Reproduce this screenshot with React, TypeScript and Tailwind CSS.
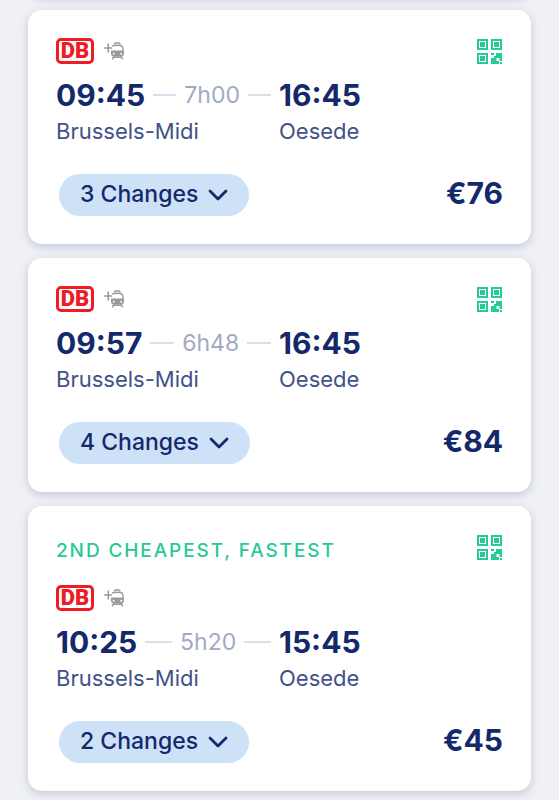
import React from 'react';

interface Trip {
  badge?: string;
  departure: string;
  duration: string;
  arrival: string;
  origin: string;
  destination: string;
  changes: number;
  price: string;
}

const trips: Trip[] = [
  { departure: '09:45', duration: '7h00', arrival: '16:45', origin: 'Brussels-Midi', destination: 'Oesede', changes: 3, price: '€76' },
  { departure: '09:57', duration: '6h48', arrival: '16:45', origin: 'Brussels-Midi', destination: 'Oesede', changes: 4, price: '€84' },
  { badge: '2nd cheapest, fastest', departure: '10:25', duration: '5h20', arrival: '15:45', origin: 'Brussels-Midi', destination: 'Oesede', changes: 2, price: '€45' },
];

const cardStyle = 'rounded-[14px] bg-white shadow-[0_3px_8px_rgba(60,70,130,0.24)]';

const DbLogo: React.FC = () => (
  <div className="flex h-[26px] w-[38px] items-center justify-center rounded-[5px] border-[3px] border-[#ee1c25] bg-white font-['Roboto','Liberation_Sans',sans-serif] text-[22px] leading-none font-black text-[#ee1c25]">
    DB
  </div>
);

const TrainIcon: React.FC = () => (
  <svg width="20" height="18" viewBox="0 0 20 18" fill="none" aria-label="Train plus connections">
    <path d="M0 6h8M4.300 1.500v9" stroke="#999" strokeWidth="1.600" />
    <path d="M10 2.200c.8-1.800 5.500-1.800 6.300 0" stroke="#999" strokeWidth="1.500" />
    <path d="M8.200 4.200C9.500 2.900 17 2.900 18.300 4.200c.9 1 .9 4 .9 5" stroke="#999" strokeWidth="1.400" />
    <path d="M7 8.500h12.900v3c0 2-1 2.900-3 2.900h-6.900c-2 0-3-.9-3-2.900z" fill="#999" />
    <path d="M10 14l-1.800 3.300M17 14l1.800 3.300M9.500 15.300h8" stroke="#999" strokeWidth="1.500" />
    <circle cx="9.700" cy="11.700" r="1" fill="#fff" />
    <circle cx="17.200" cy="11.700" r="1" fill="#fff" />
  </svg>
);

const QrIcon: React.FC = () => (
  <svg width="25" height="25" viewBox="0 0 25 25" fill="#27c998" aria-label="Mobile ticket">
    {[[0, 0], [14, 0], [0, 14]].map(([x, y]) => (
      <g key={`${x}-${y}`}>
        <path d={`M${x} ${y}h11v11h-11zM${x + 2} ${y + 2}v7h7v-7z`} fillRule="evenodd" />
        <rect x={x + 3} y={y + 3} width="5" height="5" />
      </g>
    ))}
    <path d="M14 14h3v2h-3zM19 14h6v8h-3v3h-8v-6h3v-2h2zM19.500 19v3h3v-3z" fillRule="evenodd" />
    <path d="M23 23h2v2h-2z" />
  </svg>
);

const TripCard: React.FC<{ trip: Trip }> = ({ trip }) => (
  <article className={`${cardStyle} p-7`}>
    <div className="flex items-start justify-between">
      <div>
        {trip.badge && (
          <p className="mb-[17px] text-[19px] leading-[34px] font-medium tracking-widest text-[#27c998] uppercase">{trip.badge}</p>
        )}
        <div className="flex items-center gap-[10px]">
          <DbLogo />
          <TrainIcon />
        </div>
      </div>
      <div className="pt-px pr-px">
        <QrIcon />
      </div>
    </div>

    <div className="mt-[13px] grid grid-cols-[223px_1fr] leading-9">
      <div className="flex items-center gap-2 pr-2">
        <time className="text-[30px] font-bold">{trip.departure}</time>
        <span className="h-[2px] flex-1 bg-[#dcdfeb]" />
        <span className="text-[23px] text-[#a2a9c6]">{trip.duration}</span>
        <span className="h-[2px] flex-1 bg-[#dcdfeb]" />
      </div>
      <time className="text-[30px] font-bold">{trip.arrival}</time>
      <span className="text-[22px] text-[#425288]">{trip.origin}</span>
      <span className="text-[22px] text-[#425288]">{trip.destination}</span>
    </div>

    <div className="mt-[25px] flex items-center justify-between">
      <button className="ml-[3px] flex h-[42px] items-center gap-[10px] rounded-full bg-[#cde1f7] px-[21px] pb-px text-[23px] font-medium">
        {trip.changes} Changes
        <svg width="20" height="12" viewBox="0 0 20 12" fill="none" stroke="currentColor" strokeWidth="2.800" strokeLinecap="round" strokeLinejoin="round">
          <path d="M2 2l8 8 8-8" />
        </svg>
      </button>
      <span className="pb-1 text-[30px] leading-9 font-bold">{trip.price}</span>
    </div>
  </article>
);

const App: React.FC = () => (
  <main className="flex min-h-screen flex-col gap-[14px] overflow-hidden bg-[#f0f1f6] px-7 pb-2 font-['Inter','Liberation_Sans',sans-serif] text-[#14296b]">
    <div className={`${cardStyle} -mt-9 h-8 shrink-0`} />
    {trips.map((trip) => (
      <TripCard key={trip.departure} trip={trip} />
    ))}
  </main>
);

export default App;
